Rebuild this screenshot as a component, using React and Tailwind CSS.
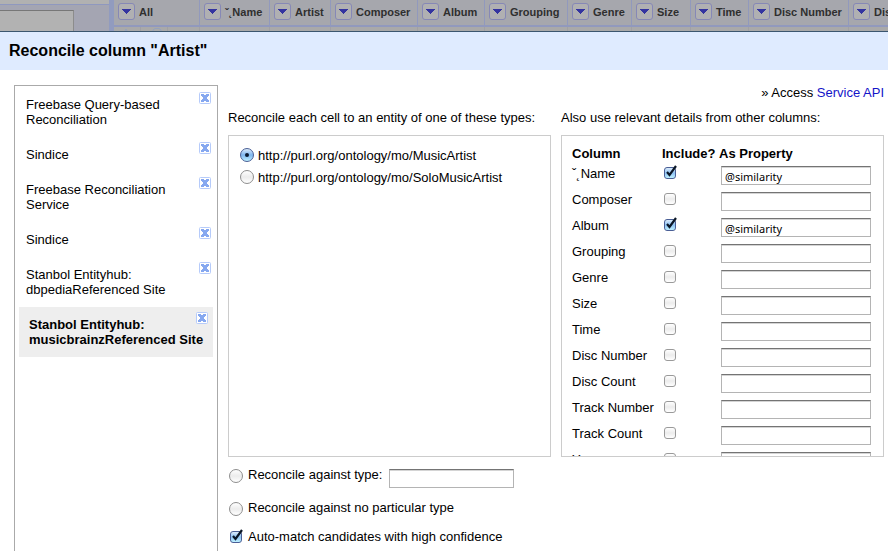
import React, { useState } from "react";

const gridColumns = [
  { label: "All", width: "w-[86px]" },
  { label: "ˇ˛Name", width: "w-[70px]" },
  { label: "Artist", width: "w-[61px]" },
  { label: "Composer", width: "w-[87px]" },
  { label: "Album", width: "w-[67px]" },
  { label: "Grouping", width: "w-[83px]" },
  { label: "Genre", width: "w-[64px]" },
  { label: "Size", width: "w-[59px]" },
  { label: "Time", width: "w-[58px]" },
  { label: "Disc Number", width: "w-[100px]" },
  { label: "Disc Count", width: "w-[100px]" },
];

const services = [
  "Freebase Query-based Reconciliation",
  "Sindice",
  "Freebase Reconciliation Service",
  "Sindice",
  "Stanbol Entityhub: dbpediaReferenced Site",
  "Stanbol Entityhub: musicbrainzReferenced Site",
];

const types = [
  "http://purl.org/ontology/mo/MusicArtist",
  "http://purl.org/ontology/mo/SoloMusicArtist",
];

const details = [
  { name: "ˇ˛Name", include: true, property: "@similarity" },
  { name: "Composer" },
  { name: "Album", include: true, property: "@similarity" },
  { name: "Grouping" },
  { name: "Genre" },
  { name: "Size" },
  { name: "Time" },
  { name: "Disc Number" },
  { name: "Disc Count" },
  { name: "Track Number" },
  { name: "Track Count" },
  { name: "Year" },
];

const fieldClass =
  "block h-[19px] border border-[#b4b4b4] border-t-[#747474] bg-white px-[3px] pt-px font-['Noto_Sans',sans-serif] text-[11px] leading-4 text-black shadow-[inset_0_1px_0_#d4d4d4] outline-none";

function Radio({ id, name, checked, onChange }) {
  return (
    <span className="relative block size-3.5 shrink-0">
      <input
        type="radio"
        id={id}
        name={name}
        checked={checked}
        onChange={onChange}
        className="peer block size-3.5 appearance-none rounded-full border border-[#8e8e8e] bg-linear-to-b from-white via-[#ececec] to-white checked:border-[#4a5f96] checked:from-[#dcecfb] checked:via-[#7fb6ee] checked:to-[#bdf0ff]"
      />
      <span className="pointer-events-none absolute top-[5px] left-[5px] hidden size-1 rounded-full bg-[#0b1a30] peer-checked:block" />
    </span>
  );
}

function Checkbox({ id, label, defaultChecked }) {
  return (
    <span className="relative block size-3 shrink-0">
      <input
        type="checkbox"
        id={id}
        aria-label={label}
        defaultChecked={defaultChecked}
        className="peer block size-3 appearance-none rounded-[3px] border border-[#9a9a9a] bg-linear-to-b from-white via-[#ececec] to-white checked:border-[#4a5f96] checked:from-[#dcecfb] checked:via-[#8fc2f3] checked:to-[#bdf0ff]"
      />
      <svg
        viewBox="0 0 14 14"
        className="pointer-events-none absolute -top-0.5 left-0 hidden size-3.5 peer-checked:block"
        fill="none"
        stroke="#0a1626"
      >
        <path d="M3 7 L5.500 10 L12 1" strokeWidth="2.200" />
      </svg>
    </span>
  );
}

function CloseIcon() {
  return (
    <svg viewBox="0 0 12 12" className="block size-3">
      <rect x="0.5" y="0.5" width="11" height="11" rx="1" fill="#fff" stroke="#b6cbfa" />
      <path
        d="M2 2h3v1h2v-1h3v2h-1v1h-1v2h1v1h1v2h-3v-1h-2v1h-3v-2h1v-1h1v-2h-1v-1h-1z"
        fill="#86a8f0"
      />
    </svg>
  );
}

function DataGrid() {
  return (
    <div className="flex h-[31px] shrink-0 overflow-hidden bg-[#a4a5b2]" aria-hidden="true">
      <div className="w-[109px] shrink-0">
        <div className="h-1 bg-[#b1b1b1]" />
        <div className="h-px bg-[#8f98bf]" />
        <div className="mt-[5px] h-6 w-[74px] border-t border-r border-t-[#777] border-r-[#8c8c8c] bg-[#b2b2b2]" />
      </div>
      <div className="min-w-0 flex-1 overflow-hidden border-l-[5px] border-[#919bbf]">
        <table className="w-[835px] table-fixed border-separate border-spacing-0 text-[11px] font-bold text-[#2f2f2f]">
          <thead>
            <tr className="h-[27px]">
              {gridColumns.map((c) => (
                <th
                  key={c.label}
                  className={`${c.width} border-r border-b-2 border-[#9199bd] bg-[#a6a7ad] p-0 align-top`}
                >
                  <div className="flex gap-1 pt-[3px] pl-1 text-left leading-[17px] whitespace-nowrap">
                    <button
                      type="button"
                      tabIndex={-1}
                      className="flex size-[17px] shrink-0 items-center justify-center rounded-[3px] border border-[#8688b6] bg-[#b0b0b2]"
                    >
                      <svg viewBox="0 0 9 5" className="h-[5px] w-[9px]" fill="#3434a0">
                        <path d="M0 0h9v1h-1v1h-1v1h-1v1h-1v1h-1v-1h-1v-1h-1v-1h-1v-1h-1z" />
                      </svg>
                    </button>
                    <span className="pt-px">{c.label}</span>
                  </div>
                </th>
              ))}
            </tr>
          </thead>
          <tbody>
            <tr className="bg-[#a9a9a9]">
              {gridColumns.map((c, i) => (
                <td key={c.label} className="h-1 border-r border-[#a0a0a4] p-0">
                  {i === 0 && (
                    <svg viewBox="0 0 85 4" className="block h-1 w-[85px]" fill="none" stroke="#94a1bd">
                      <path d="M11 4l1-2 1 2M39 4v-1l2-1.500h4l2 1.500v1" />
                      <path d="M26.500 0v4M53.500 0v4" stroke="#a0a0a4" />
                    </svg>
                  )}
                </td>
              ))}
            </tr>
          </tbody>
        </table>
      </div>
    </div>
  );
}

function ServiceList() {
  const [selected, setSelected] = useState(5);
  return (
    <ul className="w-[204px] shrink-0 border border-b-0 border-[#aaa] p-px">
      {services.map((s, i) => (
        <li
          key={i}
          className={i === selected ? "relative mx-[3px] bg-[#eee] font-bold" : "relative"}
        >
          <button
            type="button"
            onClick={() => setSelected(i)}
            className="block w-full py-2.5 pr-2 pl-2.5 text-left"
          >
            <span className="block max-w-[176px]">{s}</span>
          </button>
          <button type="button" aria-label={`Remove ${s}`} className="absolute top-[5px] right-[5px]">
            <CloseIcon />
          </button>
        </li>
      ))}
    </ul>
  );
}

function DetailsTable() {
  return (
    <table className="w-full table-fixed border-separate border-spacing-0 text-left">
      <thead>
        <tr className="h-[20px] align-top">
          <th className="w-[90px] p-0 pt-[3px]">Column</th>
          <th className="w-[57px] p-0 pt-[3px] whitespace-nowrap">Include?</th>
          <th className="p-0 pt-[3px]">As Property</th>
        </tr>
      </thead>
      <tbody>
        {details.map((d) => (
          <tr key={d.name} className="h-[26px] align-top">
            <td className="p-0 pt-[3px] whitespace-nowrap">{d.name}</td>
            <td className="p-0 pt-1 pl-0.5">
              <Checkbox label={`Include ${d.name}`} defaultChecked={d.include} />
            </td>
            <td className="p-0 pt-[3px] pl-0.5">
              <input
                type="text"
                aria-label={`Property for ${d.name}`}
                defaultValue={d.property}
                className={`${fieldClass} w-[150px]`}
              />
            </td>
          </tr>
        ))}
      </tbody>
    </table>
  );
}

export default function App() {
  const [choice, setChoice] = useState("type-0");
  const radio = (id) => ({
    id,
    name: "type-choice",
    checked: choice === id,
    onChange: () => setChoice(id),
  });

  return (
    <div className="flex h-screen flex-col overflow-hidden bg-white font-['Liberation_Sans',Arial,sans-serif] text-[13px] leading-[15px] text-black">
      <DataGrid />
      <header className="shrink-0 border-t border-[#3b566f] bg-[#dfebff] px-[9px] py-[9px]">
        <h1 className="text-base leading-5 font-bold">Reconcile column "Artist"</h1>
      </header>

      <main className="flex min-h-0 flex-1 gap-2.5 pt-[15px] pr-1 pl-3.5">
        <ServiceList />

        <div className="min-w-0 flex-1">
          <p className="text-right">
            » Access{" "}
            <a href="#service" className="text-[#1414c8]">
              Service API
            </a>
          </p>

          <div className="mt-2.5 grid grid-cols-2 gap-2.5">
            <h2 className="whitespace-nowrap">Reconcile each cell to an entity of one of these types:</h2>
            <h2 className="whitespace-nowrap">Also use relevant details from other columns:</h2>

            <div className="h-[322px] overflow-hidden border border-[#ccc] px-[11px] pt-3">
              {types.map((t, i) => (
                <div key={t} className="flex h-[22px] items-start gap-1">
                  <Radio {...radio(`type-${i}`)} />
                  <label htmlFor={`type-${i}`}>{t}</label>
                </div>
              ))}
            </div>

            <div className="h-[322px] overflow-hidden border border-[#ccc] px-2.5 pt-[7px]">
              <DetailsTable />
            </div>
          </div>

          <div className="mt-3 flex flex-col pl-px">
            <div className="flex h-[33px] items-start gap-[5px]">
              <Radio {...radio("against-type")} />
              <label htmlFor="against-type" className="-mt-0.5 pr-0.5">
                Reconcile against type:
              </label>
              <input type="text" aria-label="Type" className={`${fieldClass} w-[125px]`} />
            </div>
            <div className="flex h-[27px] items-start gap-[5px]">
              <Radio {...radio("no-type")} />
              <label htmlFor="no-type" className="-mt-0.5">
                Reconcile against no particular type
              </label>
            </div>
            <div className="flex items-center gap-1.5 pl-px">
              <Checkbox id="auto-match" defaultChecked />
              <label htmlFor="auto-match">Auto-match candidates with high confidence</label>
            </div>
          </div>
        </div>
      </main>
    </div>
  );
}
